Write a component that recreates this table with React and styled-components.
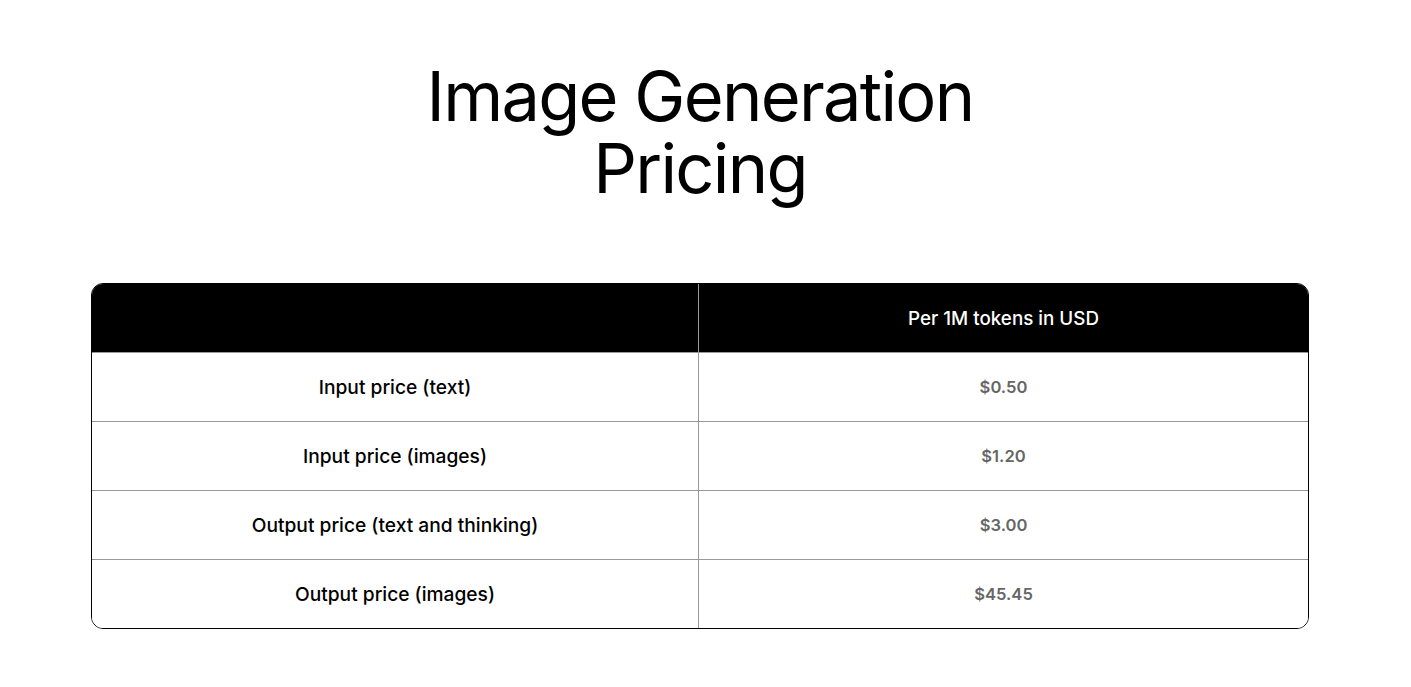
import React from 'react';
import styled, { createGlobalStyle } from 'styled-components';

const GlobalStyle = createGlobalStyle`
    body {
        margin: 0;
        background: #fff;
        font-family: 'Inter', 'Liberation Sans', sans-serif;
        color: #000;
    }
`;

const Page = styled.div`
    width: 1216px;
    margin-left: 92px;
    padding-top: 61px;
    display: flex;
    flex-direction: column;
    align-items: center;
`;

const Title = styled.h1`
    margin: 0;
    font-size: 68.5px;
    font-weight: 400;
    line-height: 72px;
    letter-spacing: -0.025em;
    text-align: center;
`;

const Table = styled.div`
    margin-top: 78px;
    width: 100%;
    border: 1px solid #000;
    border-radius: 12px;
    overflow: hidden;
    display: grid;
    grid-template-columns: 606px 1fr;
`;

const Cell = styled.div`
    height: 68px;
    display: flex;
    align-items: center;
    justify-content: center;
    font-size: ${p => (p.$price ? '16.6px' : p.$head ? '18.8px' : '19.2px')};
    font-weight: ${p => (p.$price ? 600 : 500)};
    color: ${p => (p.$head ? '#fff' : p.$price ? '#666' : '#000')};
    background: ${p => (p.$head ? '#000' : '#fff')};
    border-top: ${p => (p.$first ? 'none' : '1px solid #999')};
    border-left: ${p => (p.$right ? '1px solid #999' : 'none')};
`;

const rows = [
    ['Input price (text)', '$0.50'],
    ['Input price (images)', '$1.20'],
    ['Output price (text and thinking)', '$3.00'],
    ['Output price (images)', '$45.45'],
];

export default () => (
    <Page>
        <GlobalStyle />
        <Title>
            Image Generation
            <br />
            Pricing
        </Title>
        <Table>
            <Cell $head $first />
            <Cell $head $first $right>Per 1M tokens in USD</Cell>
            {rows.map(([label, price]) => (
                <React.Fragment key={label}>
                    <Cell>{label}</Cell>
                    <Cell $right $price>{price}</Cell>
                </React.Fragment>
            ))}
        </Table>
    </Page>
);
